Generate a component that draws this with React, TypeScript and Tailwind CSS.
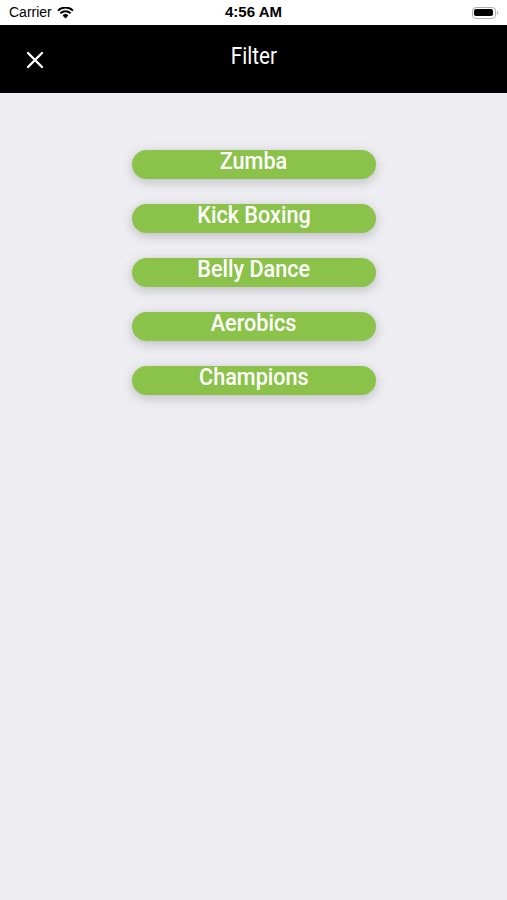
import React from "react";

const categories = ["Zumba", "Kick Boxing", "Belly Dance", "Aerobics", "Champions"];

function StatusBar() {
  return (
    <div className="relative flex h-[25px] items-center justify-between bg-white px-[9px] font-['Liberation_Sans',sans-serif] text-black">
      <div className="flex items-center gap-[5px]">
        <span className="text-[14px]">Carrier</span>
        <svg width="17" height="12" viewBox="0 0 17 12">
          <path d="M8.5 11.5 L5.6 8.4 A4.2 4.2 0 0 1 11.4 8.4 Z" fill="black" />
          <path d="M3.4 6.2 A7.4 7.4 0 0 1 13.6 6.2" stroke="black" strokeWidth="2" fill="none" />
          <path d="M1 3.6 A10.8 10.8 0 0 1 16 3.6" stroke="black" strokeWidth="2" fill="none" />
        </svg>
      </div>
      <span className="absolute left-1/2 -translate-x-1/2 text-[15px] font-bold">4:56 AM</span>
      <div className="flex items-center">
        <div className="flex h-[12px] w-[24px] items-center rounded-[4px] border border-[#b0b0b0] p-[1.5px]">
          <div className="h-full w-full rounded-[2px] bg-black" />
        </div>
        <div className="ml-[1px] h-[4px] w-[1.5px] rounded-r bg-[#b0b0b0]" />
      </div>
    </div>
  );
}

export default function App() {
  return (
    <div className="flex min-h-[900px] flex-col bg-[#ededf2]">
      <StatusBar />
      <div className="relative flex h-[68px] items-center justify-center bg-black">
        <button className="absolute left-[26px] top-[26px]">
          <svg width="18" height="18" viewBox="0 0 18 18">
            <path d="M2 2 L16 16 M16 2 L2 16" stroke="white" strokeWidth="2.4" strokeLinecap="round" />
          </svg>
        </button>
        <span className="-mt-[6px] inline-block scale-x-[0.86] font-['Roboto',sans-serif] text-[24px] text-white">
          Filter
        </span>
      </div>
      <div className="flex flex-col items-center gap-[25px] pt-[57px]">
        {categories.map((name) => (
          <button
            key={name}
            className="flex h-[29px] w-[244px] items-start justify-center rounded-full bg-[#8bc34a] text-white shadow-[0_3px_12px_rgba(0,0,0,0.2)]"
          >
            <span className="-mt-[3px] inline-block scale-x-[0.9] font-['Roboto',sans-serif] text-[24px] font-medium leading-[28px]">
              {name}
            </span>
          </button>
        ))}
      </div>
    </div>
  );
}
